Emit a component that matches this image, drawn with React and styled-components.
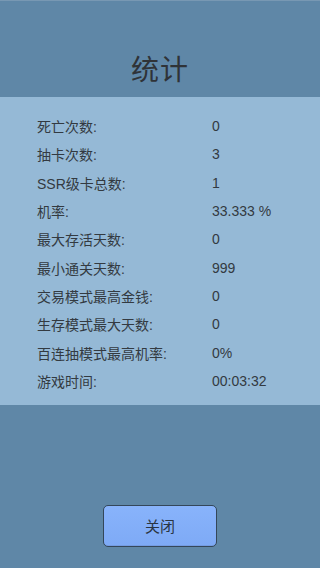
import React from 'react'
import styled, { createGlobalStyle } from 'styled-components'

const stats = [
	['死亡次数:', '0'],
	['抽卡次数:', '3'],
	['SSR级卡总数:', '1'],
	['机率:', '33.333 %'],
	['最大存活天数:', '0'],
	['最小通关天数:', '999'],
	['交易模式最高金钱:', '0'],
	['生存模式最大天数:', '0'],
	['百连抽模式最高机率:', '0%'],
	['游戏时间:', '00:03:32'],
]

const GlobalStyle = createGlobalStyle`
	html, body {
		margin: 0;
		padding: 0;
		background: #5f87a7;
	}
	body {
		font-family: 'Liberation Sans', 'Noto Sans CJK SC', sans-serif;
		color: #333a41;
	}
`

const Screen = styled.div`
	width: 320px;
	height: 568px;
	display: flex;
	flex-direction: column;
	background: #5f87a7;
	border-top: 1px solid #7898b3;
	box-sizing: border-box;
`

const Header = styled.div`
	height: 96px;
	display: flex;
	align-items: flex-end;
	justify-content: center;
	padding-bottom: 9px;
	box-sizing: border-box;
`

const Title = styled.h1`
	margin: 0;
	font-size: 28px;
	font-weight: 400;
	font-family: 'Noto Sans CJK SC', sans-serif;
	color: #2f3338;
	letter-spacing: 1px;
`

const Panel = styled.div`
	height: 308px;
	background: #95b9d6;
	padding: 15px 0 10px 37px;
	box-sizing: border-box;
`

const Row = styled.div`
	display: grid;
	grid-template-columns: 175px 1fr;
	height: 28.33px;
	align-items: center;
	font-size: 14px;
`

const Label = styled.span`
	font-family: 'Liberation Sans', 'Noto Sans CJK SC', sans-serif;
	font-size: 14px;
`

const Value = styled.span`
	font-family: 'Liberation Sans', sans-serif;
	font-size: 14px;
`

const Footer = styled.div`
	flex: 1;
	display: flex;
	justify-content: center;
	padding-top: 100px;
`

const CloseButton = styled.button`
	width: 114px;
	height: 42px;
	border-radius: 5px;
	border: 1px solid #34475a;
	background: linear-gradient(#88b3fb, #7eaaf6);
	box-shadow: inset 0 -1px 0 rgba(0, 0, 0, 0.08);
	font-family: 'Noto Sans CJK SC', sans-serif;
	font-size: 15px;
	line-height: 1;
	color: #2a3542;
	cursor: pointer;
	padding: 0 0 2px;
`

export default function App() {
	return (
		<>
			<GlobalStyle />
			<Screen>
				<Header>
					<Title>统计</Title>
				</Header>
				<Panel>
					{stats.map(([label, value]) => (
						<Row key={label}>
							<Label>{label}</Label>
							<Value>{value}</Value>
						</Row>
					))}
				</Panel>
				<Footer>
					<CloseButton>关闭</CloseButton>
				</Footer>
			</Screen>
		</>
	)
}
